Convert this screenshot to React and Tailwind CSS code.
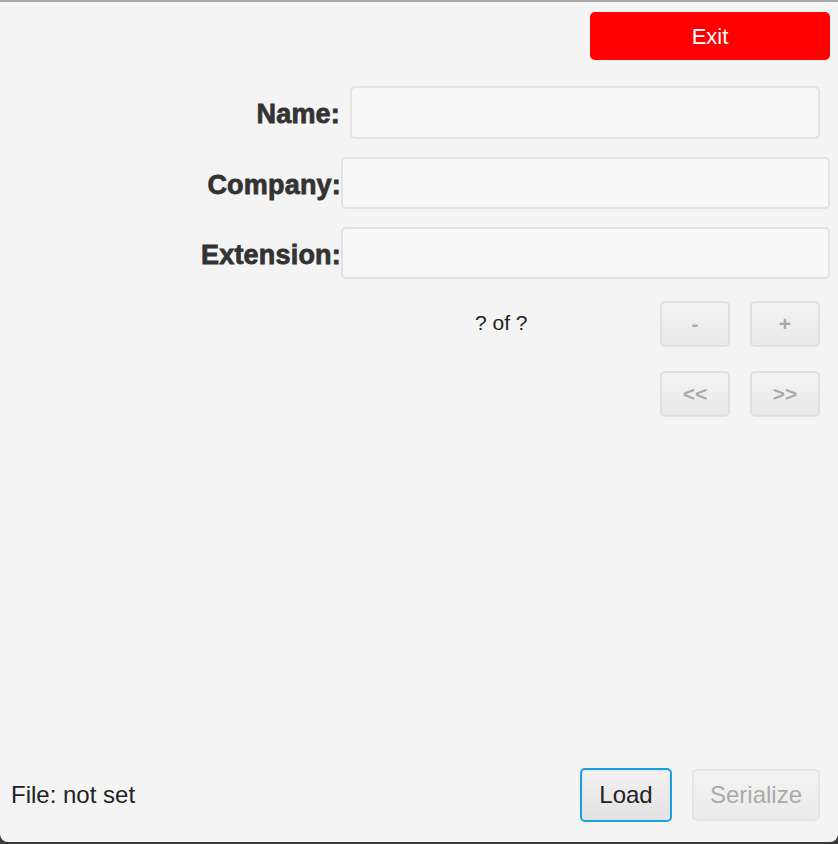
export default function App() {
  const font = { fontFamily: '"Liberation Sans", Arial, sans-serif' };
  const label =
    "text-right text-[27px] font-bold text-[#333333] [-webkit-text-stroke:0.8px_#333333] leading-none pt-[4px] tracking-[0.2px]";
  const input =
    "h-[52px] rounded-[5px] border-2 border-[#e2e2e2] bg-[#f8f8f8]";
  const smallBtn =
    "w-[70px] h-[46px] rounded-[5px] border-2 border-[#e0e0e0] bg-gradient-to-b from-[#f3f3f3] to-[#e9e9e9] text-[21px] font-bold text-[#aaaaaa] flex items-center justify-center";
  return (
    <div className="w-[838px] h-[844px] bg-[#3a3a3a] overflow-hidden" style={font}>
      <div className="h-[842px] bg-[#f4f4f4] rounded-b-[8px] border-t-2 border-[#a8a8a8] flex flex-col">
        <div className="flex justify-end pr-[8px] pt-[10px]">
          <button className="w-[240px] h-[48px] rounded-[5px] bg-[#ff0000] text-white text-[22px] flex items-center justify-center">
            Exit
          </button>
        </div>
        <div className="grid grid-cols-[341px_1fr] pr-[8px] mt-[26px] gap-y-[18px] items-center">
          <div className={label + " pr-[1px]"}>Name:</div>
          <div className={input + " ml-[9px] mr-[10px] h-[53px]"} />
          <div className={label}>Company:</div>
          <div className={input} />
          <div className={label}>Extension:</div>
          <div className={input} />
        </div>
        <div className="flex items-center mt-[22px] pr-[18px]">
          <div className="pl-[475px] text-[21px] text-[#222222] -mt-[2px]">? of ?</div>
          <div className="ml-auto flex gap-[20px]">
            <div className={smallBtn}>-</div>
            <div className={smallBtn}>+</div>
          </div>
        </div>
        <div className="flex justify-end mt-[24px] pr-[18px] gap-[20px]">
          <div className={smallBtn}>&lt;&lt;</div>
          <div className={smallBtn}>&gt;&gt;</div>
        </div>
        <div className="mt-auto mb-[20px] flex items-center px-[11px] pr-[18px]">
          <div className="text-[24px] text-[#222222]">File: not set</div>
          <div className="ml-auto flex items-center gap-[20px]">
            <button className="w-[92px] h-[54px] rounded-[5px] border-2 border-[#1ba0dc] bg-gradient-to-b from-[#f2f2f2] to-[#e2e2e2] shadow-[inset_0_0_0_1px_#d6e9f3] text-[24px] text-[#222222] flex items-center justify-center">
              Load
            </button>
            <button className="w-[128px] h-[52px] rounded-[5px] border-2 border-[#e4e4e4] bg-gradient-to-b from-[#f3f3f3] to-[#ebebeb] text-[24px] text-[#aaaaaa] flex items-center justify-center">
              Serialize
            </button>
          </div>
        </div>
      </div>
    </div>
  );
}
